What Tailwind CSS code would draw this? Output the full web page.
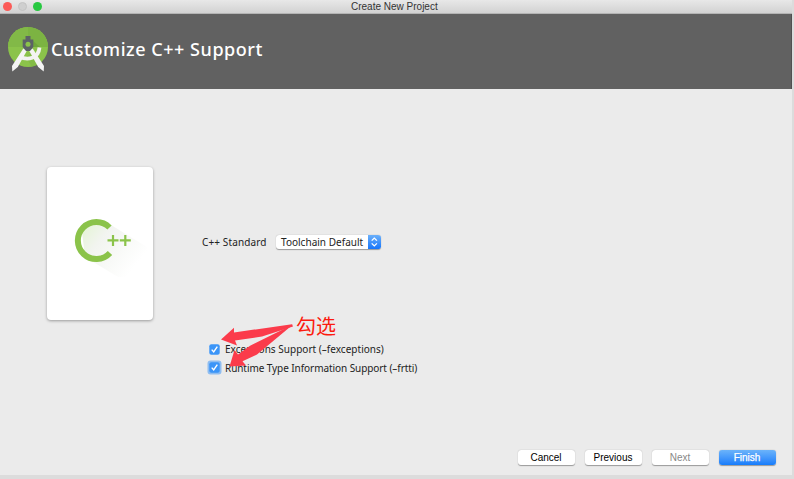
<!DOCTYPE html>
<html lang="en">
<head>
<meta charset="utf-8">
<title>Create New Project</title>
<script src="https://cdn.jsdelivr.net/npm/@tailwindcss/browser@4"></script>
</head>
<body class="w-[794px] h-[479px] overflow-hidden bg-[#dcdcdc]">
<main class="relative flex flex-col w-[792px] h-[475px] bg-[#ebebeb] font-['Noto_Sans','Noto_Sans_CJK_SC',sans-serif] text-[#222]">
  <div class="flex h-[14px] shrink-0 items-center border-b border-[#b4b4b4] bg-linear-to-b from-[#e8e8e8] to-[#d2d2d2] pl-[3px]">
    <div class="flex w-[120px] gap-[6px] pb-px">
      <i class="size-[9px] rounded-full bg-[#fc5b57]"></i>
      <i class="size-[9px] rounded-full border border-[#c4c4c4] bg-[#cfcfcf]"></i>
      <i class="size-[9px] rounded-full bg-[#27c840]"></i>
    </div>
    <h1 class="ml-[228px] whitespace-nowrap font-['Liberation_Sans',sans-serif] text-[10px] leading-[12px] tracking-[0px] text-[#333]">Create New Project</h1>
  </div>
  <header class="flex h-[75px] shrink-0 border-r border-[#505050] bg-[#616161] pl-[7px]">
    <svg class="mt-[12px] h-[48px] w-[42px] shrink-0" viewBox="7 26 42 48">
      <defs><clipPath id="disc"><circle cx="28" cy="47" r="20"/></clipPath></defs>
      <circle cx="28" cy="47" r="20" fill="#8bc34a"/>
      <g clip-path="url(#disc)">
        <path d="M8 27h40v20H8z" fill="#7cb342"/>
        <path d="M8 27h20v20H8z" fill="#82b947"/>
        <path d="M32 40l8 7H32z" fill="#689f38" opacity=".7"/>
        <path d="M33 52l10 15H32l-6-10z" fill="#7cb342" opacity=".5"/>
      </g>
      <path d="M19.500 56.500c8 4.500 19 2 20-9" fill="none" stroke="#f2f2f2" stroke-width="3.800"/>
      <path d="M23.300 48.500l3.700 2-9.200 16.500-5.500 4.500-.3-5.500zM32.700 48.500l-3.700 2 9.200 16.500 5.500 4.500.3-5.500z" fill="#f4f4f4"/>
      <path d="M25.500 36h5v3.500h2.800v7.500L30 51h-4l-3.300-4v-7.500h2.800z" fill="#5c6266"/>
      <circle cx="28" cy="44.300" r="2.500" fill="#8bc34a"/>
    </svg>
    <h2 class="ml-[2px] mt-[22px] whitespace-nowrap text-[18px] font-medium leading-[27px] tracking-[0.54px] text-white">Customize C++ Support</h2>
  </header>
  <section class="flex h-[343px] shrink-0">
    <div class="ml-[47px] mt-[78px] h-[153px] w-[106px] shrink-0 rounded-[4px] bg-white shadow-[0_1px_3px_rgba(0,0,0,0.35)]">
      <svg class="h-[153px] w-[106px]" viewBox="47 167 106 153">
        <defs>
          <linearGradient id="cast" x1="80" y1="228" x2="132" y2="270" gradientUnits="userSpaceOnUse"><stop stop-color="#e4f4d4"/><stop offset=".35" stop-color="#f2f4f0"/><stop offset="1" stop-color="#fff"/></linearGradient>
        </defs>
        <path d="M111 225l36 22-1 30h-28L85 257l-3-25 14-11z" fill="url(#cast)"/>
        <path d="M109.500 227.500A18.500 18.500 0 1 0 110 253" fill="none" stroke="#8bc34a" stroke-width="6"/>
        <path d="M107.500 240.400h11M113 235v11M119.800 240.400h11M125.300 235v11" stroke="#8bc34a" stroke-width="2.200"/>
      </svg>
    </div>
    <div class="ml-[49px] mt-[145px] flex flex-col">
      <label class="flex h-[16px] items-center whitespace-nowrap text-[10px] leading-[16px]">
        <span class="w-[74px] tracking-[0.12px]">C++ Standard</span>
        <span class="flex h-[14px] w-[105px] items-center rounded-[3px] bg-white shadow-[0_0.5px_1px_rgba(0,0,0,0.35)]">
          <span class="w-[92px] pl-[5px] tracking-[0.02px]">Toolchain Default</span>
          <svg class="h-[14px] w-[13px]" viewBox="0 0 13 15" preserveAspectRatio="none"><defs><linearGradient id="blue" x2="0" y2="1"><stop stop-color="#6bb0fa"/><stop offset="1" stop-color="#1876fb"/></linearGradient></defs><path d="M0 0h10q3 0 3 3v9q0 3-3 3H0z" fill="url(#blue)"/><path d="M3.700 6l2.600-2.700L8.900 6M3.700 9l2.600 2.700L8.900 9" fill="none" stroke="#fff" stroke-width="1.3"/></svg>
        </span>
      </label>
      <div class="mt-[91px] flex flex-col gap-[2px] pl-[7px] text-[10px] leading-[16px]">
        <label class="flex h-[16px] items-center gap-[5px] whitespace-nowrap">
          <svg class="size-[11px]" viewBox="0 0 11 11"><rect x=".3" y=".3" width="10.400" height="10.400" rx="2" fill="#3b95f8"/><path d="M2.700 5.600l2 2.300 3.600-5.300" fill="none" stroke="#fff" stroke-width="1.4"/></svg>
          <span class="tracking-[0.02px]">Exceptions Support (–fexceptions)</span>
        </label>
        <label class="flex h-[17px] items-center gap-[5px] whitespace-nowrap">
          <svg class="size-[11px] overflow-visible" viewBox="0 0 11 11"><rect x="-1.500" y="-1.500" width="14" height="14" rx="3" fill="#8fbdf0"/><rect x=".3" y=".3" width="10.400" height="10.400" rx="2" fill="#3b95f8"/><path d="M2.700 5.600l2 2.300 3.600-5.300" fill="none" stroke="#fff" stroke-width="1.4"/></svg>
          <span class="tracking-[-0.07px]">Runtime Type Information Support (–frtti)</span>
        </label>
      </div>
    </div>
  </section>
  <footer class="flex justify-end gap-[10px] pr-[16.500px] pt-[18px] font-['Liberation_Sans',sans-serif] text-[10px] leading-[15px] text-black">
    <button class="h-[15px] w-[57px] rounded-[3px] bg-white shadow-[0_0.5px_1px_rgba(0,0,0,0.35)]">Cancel</button>
    <button class="h-[15px] w-[57px] rounded-[3px] bg-white shadow-[0_0.5px_1px_rgba(0,0,0,0.35)]">Previous</button>
    <button class="h-[15px] w-[57px] rounded-[3px] bg-white text-[#888] shadow-[0_0.5px_1px_rgba(0,0,0,0.35)]">Next</button>
    <button class="h-[15px] w-[57px] rounded-[3px] bg-linear-to-b from-[#6bb3fa] to-[#147cfb] text-white [-webkit-text-stroke:0.25px_white] shadow-[0_0.5px_1px_rgba(0,0,0,0.35)]">Finish</button>
  </footer>
  <svg class="pointer-events-none absolute left-0 top-0 h-[475px] w-[792px]" viewBox="0 0 792 475">
    <g fill="#fb3b4b">
      <path d="M292 324.200L234 332.500 234 327.700 221 339.500 237 345.500 235 340.500 262 336.500 293 326.500z"/>
      <path d="M293 324.500L250 345.800 238 354.500 234.500 350 229.500 366.500 246 365.500 242.500 361.300 257 354.500z"/>
    </g>
  </svg>
  <p class="absolute left-[296px] top-[313px] whitespace-nowrap font-['Noto_Sans_CJK_SC',sans-serif] text-[20px] leading-[26px] text-[#fb1b10]">勾选</p>
</main>
</body>
</html>
